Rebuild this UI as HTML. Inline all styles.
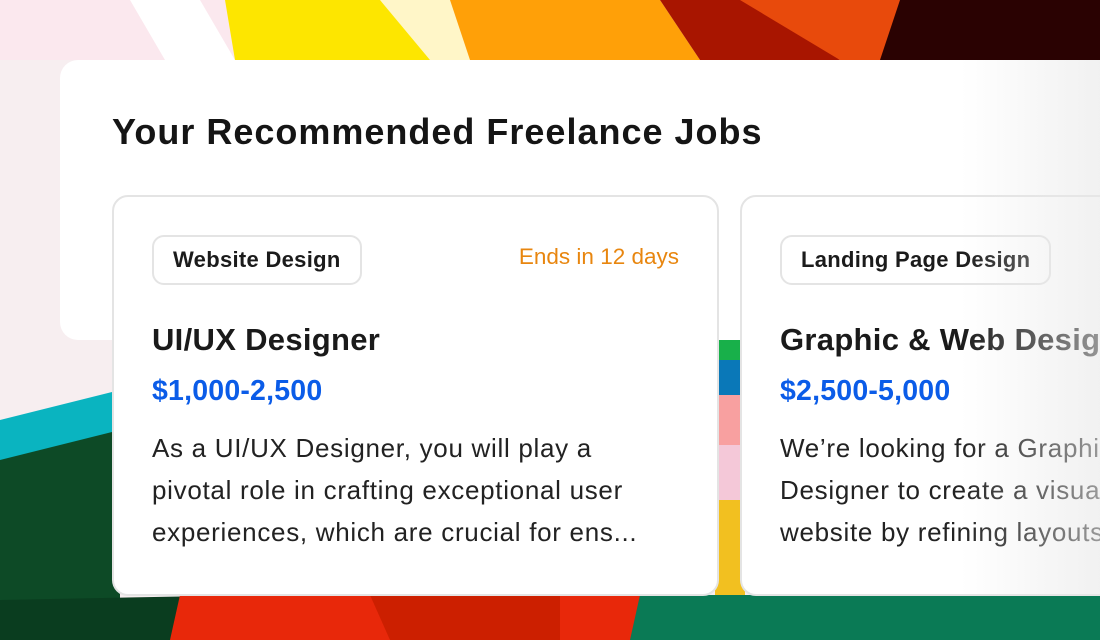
<!DOCTYPE html>
<html><head><meta charset="utf-8"><style>
*{margin:0;padding:0;box-sizing:border-box}
body{width:1100px;height:640px;overflow:hidden;position:relative;font-family:"Liberation Sans",sans-serif;background:#fff}
svg.bg{position:absolute;left:0;top:0}
.panel{position:absolute;left:60px;top:60px;width:1100px;height:280px;background:#fff;border-radius:18px}
h1{position:absolute;left:112px;top:111px;font-size:36px;font-weight:bold;color:#151515;letter-spacing:1px;white-space:nowrap}
.card{position:absolute;top:195px;width:607px;height:401px;background:#fff;border:2px solid #e4e4e4;border-radius:16px}
.tag{position:absolute;left:38px;top:38px;height:50px;padding:0 19px;border:2px solid #e4e4e4;border-radius:12px;font-size:22px;font-weight:bold;color:#1b1b1b;line-height:46px;letter-spacing:0.3px;white-space:nowrap}
.ends{position:absolute;right:38px;top:47px;font-size:22.5px;color:#e8860f;white-space:nowrap}
.t{position:absolute;left:38px;top:125px;font-size:31px;font-weight:bold;color:#1a1a1a;white-space:nowrap;letter-spacing:0.3px}
.p{position:absolute;left:38px;top:178px;font-size:28.5px;font-weight:bold;color:#0b5ce8;letter-spacing:0.2px}
.d{position:absolute;left:38px;top:230px;font-size:26px;line-height:42px;color:#222;width:600px;white-space:nowrap;letter-spacing:0.7px}
.fade{position:absolute;left:960px;top:60px;width:140px;height:536px;background:linear-gradient(90deg,rgba(255,255,255,0),rgba(232,232,232,0.6))}
</style></head><body>
<svg class="bg" width="1100" height="640" viewBox="0 0 1100 640">
<rect width="1100" height="640" fill="#f7eef0"/>
<polygon points="0,0 230,0 240,60 0,60" fill="#fbe8ee"/>
<polygon points="130,0 200,0 235,60 165,60" fill="#ffffff"/>
<polygon points="225,0 390,0 460,60 235,60" fill="#fde600"/>
<polygon points="380,0 450,0 470,60 430,60" fill="#fff6c8"/>
<polygon points="450,0 660,0 700,60 470,60" fill="#ffa008"/>
<polygon points="660,0 760,0 840,60 700,60" fill="#a81500"/>
<polygon points="740,0 900,0 900,60 840,60" fill="#e84a0c"/>
<polygon points="900,0 1100,0 1100,60 880,60" fill="#2a0202"/>
<polygon points="0,420 120,390 120,640 0,640" fill="#0ab4c0"/>
<polygon points="0,460 120,430 120,640 0,640" fill="#0d4a26"/>
<polygon points="0,600 260,595 250,640 0,640" fill="#0a3d1f"/>
<polygon points="180,595 660,595 640,640 170,640" fill="#e8280a"/>
<polygon points="370,595 560,595 560,640 390,640" fill="#cc1f00"/>
<polygon points="640,595 1100,595 1100,640 630,640" fill="#0a7a55"/>
<rect x="715" y="340" width="30" height="20" fill="#18b04a"/>
<rect x="715" y="360" width="30" height="35" fill="#0a78b8"/>
<rect x="715" y="395" width="30" height="50" fill="#f8a0a0"/>
<rect x="715" y="445" width="30" height="55" fill="#f4c8d8"/>
<rect x="715" y="500" width="30" height="95" fill="#f2c020"/>
</svg>
<div class="panel"></div>
<h1>Your Recommended Freelance Jobs</h1>
<div class="card" style="left:112px">
<div class="tag">Website Design</div>
<div class="ends">Ends in 12 days</div>
<div class="t">UI/UX Designer</div>
<div class="p">$1,000-2,500</div>
<div class="d">As a UI/UX Designer, you will play a<br>pivotal role in crafting exceptional user<br>experiences, which are crucial for ens...</div>
</div>
<div class="card" style="left:740px">
<div class="tag">Landing Page Design</div>
<div class="t">Graphic &amp; Web Designer</div>
<div class="p">$2,500-5,000</div>
<div class="d">We’re looking for a Graphic<br>Designer to create a visual<br>website by refining layouts</div>
</div>
<div class="fade"></div>
</body></html>
